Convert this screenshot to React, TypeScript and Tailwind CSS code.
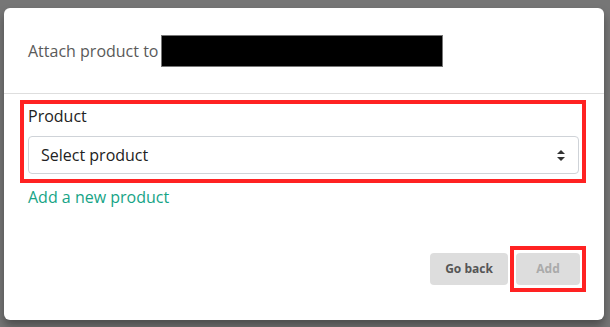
import React from "react";

export default function App() {
  return (
    <div
      className="w-[610px] h-[327px] bg-[#767676] overflow-hidden pt-2 pl-1"
      style={{ fontFamily: '"Open Sans", "Noto Sans", sans-serif' }}
    >
      <div className="w-[600px] h-[312px] bg-white rounded-md shadow-[0_6px_10px_rgba(0,0,0,0.35)] flex flex-col">
        <div className="h-[86px] flex items-center pl-6 border-b border-[#dedede]">
          <span className="text-[16px] text-[#5a5a5a] leading-6">Attach product to</span>
          <div className="ml-[3px] w-[282px] h-[32px] bg-black border border-[#777]" />
        </div>
        <div className="pl-4 pr-[18px] pt-[6px]">
          <div className="border-4 border-[#ff2222] pt-0 pb-[5px] pl-1 pr-[3px]">
            <div className="text-[16px] leading-6 text-[#222]">Product</div>
            <div className="mt-2 h-[38px] border border-[#cfd3d8] rounded-[4px] flex items-center justify-between pl-3 pr-[13px]">
              <span className="text-[16px] text-[#222]">Select product</span>
              <svg width="8" height="11" viewBox="0 0 8 11">
                <path d="M4 0 L8 4 L0 4 Z" fill="#333" />
                <path d="M0 7 L8 7 L4 11 Z" fill="#333" />
              </svg>
            </div>
          </div>
          <div className="mt-[2px] pl-2 text-[16px] leading-6 text-[#16a486]">Add a new product</div>
          <div className="mt-[37px] flex justify-end items-center">
            <button className="w-[78px] h-[32px] rounded-[4px] bg-[#dddddd] text-[12px] font-bold text-[#555]">
              Go back
            </button>
            <div className="ml-[2px] border-4 border-[#ff2222] px-[2px] py-[3px]">
              <button className="block w-[64px] h-[32px] rounded-[4px] bg-[#dddddd] text-[12px] font-bold text-[#aaa]">
                Add
              </button>
            </div>
          </div>
        </div>
      </div>
    </div>
  );
}
